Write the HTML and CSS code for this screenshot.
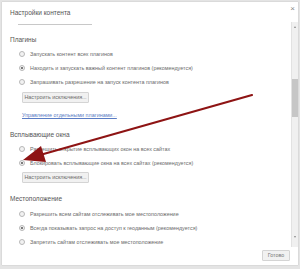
FILE: index.html
```html
<!DOCTYPE html>
<html lang="ru">
<head>
	<meta charset="utf-8"/>
	<title>Настройки контента</title>
	<link rel="stylesheet" href="styles.css">
</head>
<body>

<!--диалог настроек контента-->
<div class="dlg">
	<div class="dlg_head">
		<span class="dlg_title">Настройки контента</span>
		<span class="dlg_close">×</span>
	</div>
	<div class="dlg_body">
		<div class="dlg_scroll">
			<div class="tab_line"></div>

			<div class="sec_title">Плагины</div>
			<div class="opt"><i class="rb"></i>Запускать контент всех плагинов</div>
			<div class="opt"><i class="rb rb_on"></i>Находить и запускать важный контент плагинов (рекомендуется)</div>
			<div class="opt"><i class="rb"></i>Запрашивать разрешение на запуск контента плагинов</div>
			<a class="btn btn_exc" href="javascript:void(0);">Настроить исключения...</a>
			<a class="lnk" href="javascript:void(0);">Управление отдельными плагинами...</a>

			<div class="sec_title sec_popup">Всплывающие окна</div>
			<div class="opt"><i class="rb"></i>Разрешить открытие всплывающих окон на всех сайтах</div>
			<div class="opt"><i class="rb rb_on"></i>Блокировать всплывающие окна на всех сайтах (рекомендуется)</div>
			<a class="btn btn_exc btn_exc2" href="javascript:void(0);">Настроить исключения...</a>

			<div class="sec_title sec_geo">Местоположение</div>
			<div class="opt opt_first"><i class="rb"></i>Разрешить всем сайтам отслеживать мое местоположение</div>
			<div class="opt"><i class="rb rb_on"></i>Всегда показывать запрос на доступ к геоданным (рекомендуется)</div>
			<div class="opt"><i class="rb"></i>Запретить сайтам отслеживать мое местоположение</div>
		</div>
		<div class="sbar">
			<span class="sbar_up"></span>
			<span class="sbar_thumb"></span>
			<span class="sbar_down"></span>
		</div>
	</div>
	<div class="dlg_foot">
		<a class="btn btn_done" href="javascript:void(0);">Готово</a>
	</div>
</div>

<!--красная стрелка поверх-->
<svg class="arrow" width="300" height="269" viewBox="0 0 300 269">
	<line x1="252" y1="95" x2="40" y2="155" stroke="#8e1414" stroke-width="2.2" stroke-linecap="round"/>
	<polygon points="23,160 41,146 46,162" fill="#8e1414"/>
</svg>

</body>
</html>
```

FILE: styles.css
```css
html,body{
	margin:0;
	padding:0;
	height:100%;
}
body{
	background:#e4e4e4;
	font-family:"Liberation Sans",Arial,sans-serif;
	color:#555;
	position:relative;
	overflow:hidden;
}
/*диалог*/
.dlg{
	margin:2px 0 0 2px;
	width:296px;
	height:263px;
	background:#fff;
	box-shadow:0 0 1px #aaa;
	display:flex;
	flex-direction:column;
}
.dlg_head{
	height:20px;
	padding-left:8px;
	position:relative;
	font-size:6.5px;
	line-height:22px;
	color:#555;
}
.dlg_close{
	position:absolute;
	right:3px;
	top:2px;
	font-size:8px;
	line-height:10px;
	color:#888;
}
.dlg_body{
	height:225px;
	display:flex;
}
.dlg_scroll{
	flex:1;
	padding-left:8px;
	overflow:hidden;
	font-size:5.4px;
}
.tab_line{
	margin:2px 0 0 8px;
	width:74px;
	height:1px;
	background:#c8c8c8;
}
.sec_title{
	margin-top:10px;
	font-size:6.5px;
	line-height:10px;
	color:#555;
}
.sec_popup{
	margin-top:10px;
}
.sec_geo{
	margin-top:11px;
}
.opt{
	display:flex;
	align-items:center;
	height:14px;
	margin-left:9px;
	color:#6a6a6a;
	white-space:nowrap;
}
.sec_title + .opt{
	margin-top:2px;
}
.opt_first{
	margin-top:3px!important;
}
.rb{
	display:block;
	width:4px;
	height:4px;
	margin-right:5px;
	border:0.6px solid #b8b8b8;
	border-radius:50%;
	background:#f2f2f2;
	position:relative;
	flex:none;
}
.rb_on:after{
	content:'';
	position:absolute;
	left:1px;
	top:1px;
	width:2px;
	height:2px;
	border-radius:50%;
	background:#555;
}
/*кнопки*/
.btn{
	display:block;
	box-sizing:border-box;
	text-decoration:none;
	color:#6a6a6a;
	border:1px solid #d4d4d4;
	background:#f1f1f1;
	border-radius:1px;
	text-align:center;
	font-size:5.4px;
}
.btn_exc{
	margin:3px 0 0 12px;
	width:67px;
	height:11px;
	line-height:9px;
}
.btn_exc2{
	margin-top:2px;
}
.lnk{
	display:block;
	margin:7px 0 0 12px;
	line-height:10px;
	color:#5a7cc4;
	text-decoration:underline;
}
/*полоса прокрутки*/
.sbar{
	width:6px;
	background:#f0f0f0;
	border-left:0.5px solid #e2e2e2;
	display:flex;
	flex-direction:column;
	align-items:center;
}
.sbar_up,.sbar_down{
	width:0;
	height:0;
	border-left:1.5px solid transparent;
	border-right:1.5px solid transparent;
}
.sbar_up{
	margin-top:4px;
	border-bottom:2px solid #888;
}
.sbar_down{
	margin-top:119px;
	border-top:2px solid #888;
}
.sbar_thumb{
	margin-top:51px;
	width:6px;
	height:38px;
	background:#c6c6c6;
}
.dlg_foot{
	flex:1;
	display:flex;
	justify-content:flex-end;
	padding-right:8px;
}
.btn_done{
	margin-top:3px;
	width:28px;
	height:11px;
	line-height:9px;
	color:#777;
}
.arrow{
	position:absolute;
	left:0;
	top:0;
}
```
